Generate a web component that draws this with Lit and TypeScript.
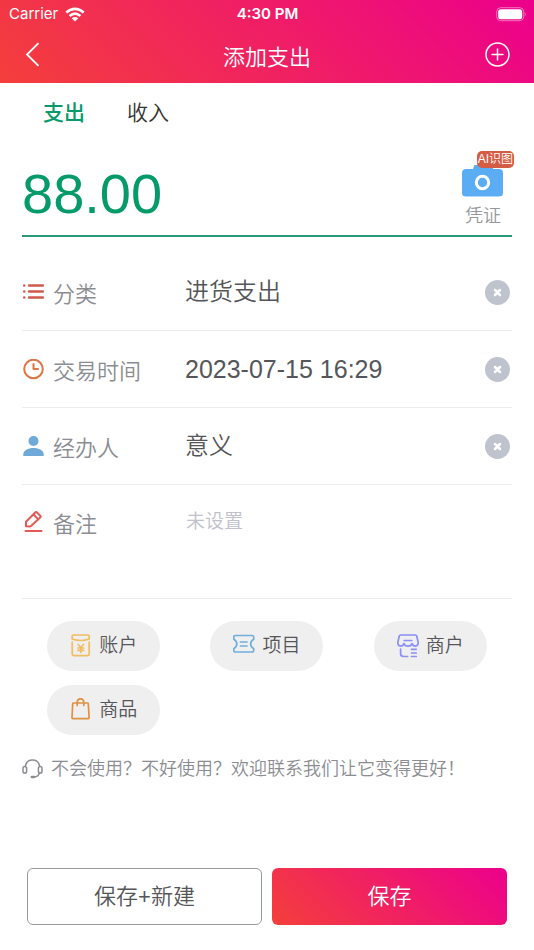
import { LitElement, html, svg, css, TemplateResult } from "lit";
import { customElement, state } from "lit/decorators.js";

const icons: Record<string, TemplateResult> = {
  list: svg`<g fill="none" stroke="#cf5a4d" stroke-linecap="round" stroke-width="2.400">
    <path d="M6 3.500h14M6 9.500h14M6 15.500h14"/><path d="M1.200 3.500h.1M1.200 9.500h.1M1.200 15.500h.1"/></g>`,
  clock: svg`<g fill="none" stroke="#dd7548" stroke-width="2" stroke-linecap="round" stroke-linejoin="round">
    <circle cx="10.500" cy="10" r="9.300"/><path d="M10.500 5v5h4.500"/></g>`,
  person: svg`<g fill="#6fa9d8"><circle cx="10.500" cy="5" r="5"/><path d="M.3 20v-1.500c0-4 4.700-6.400 10.200-6.400s10.200 2.400 10.200 6.400v1.500z"/></g>`,
  pencil: svg`<g fill="none" stroke="#e25a55" stroke-width="2" stroke-linejoin="round" stroke-linecap="round">
    <path d="M3 15.300v-4.600L12.200 1.500q.9-.9 1.800 0l3.200 3.200q.9.900 0 1.800L8 15q-.5.400-1 .4zM10.500 3.500l4.600 4.600M2.500 20h16"/></g>`,
  account: svg`<g fill="none" stroke="#f0bd62" stroke-width="1.700" stroke-linecap="round" stroke-linejoin="round">
    <path d="M3.500 1h14.500q1.200 0 1.200 1.200v2.800q-8.500 3-17 0V2.200q0-1.200 1.300-1.200zM2.200 8v12q0 1.600 1.600 1.600h13.800q1.600 0 1.600-1.600V8"/><path d="M8.200 10.500l2.600 3 2.600-3M10.800 13.500v5M8 14h5.600M8 16.400h5.600"/></g>`,
  project: svg`<g fill="none" stroke="#70afdc" stroke-width="1.700" stroke-linecap="round" stroke-linejoin="round">
    <path d="M2.500 1.500h16.500q1.700 0 1.700 1.700v2.100q-3 1.700-3 4.700t3 4.700v1.600q0 1.700-1.700 1.700H2.500q-1.700 0-1.700-1.700v-1.600q3-1.700 3-4.700t-3-4.700V3.200q0-1.700 1.700-1.700zM7.500 8h6.500M7.500 12h6.500"/></g>`,
  shop: svg`<g fill="none" stroke="#8b8ff5" stroke-width="1.700" stroke-linecap="round" stroke-linejoin="round">
    <path d="M3.700 1h14.600q1.200 0 1.500 1.200l1.400 6.300q.3 3.300-2.700 3.700-2.600 0-3.400-2.700-1 2.700-4.100 2.700t-4.100-2.700q-.8 2.700-3.400 2.700-3-.4-2.700-3.700l1.400-6.300q.3-1.200 1.500-1.200zM7.200 6.500h7.600M3.600 15v4.500q0 3 3 3h4M14.500 15.300h4.700M14.500 19h4.700M14.500 22.500h4.700"/></g>`,
  goods: svg`<g fill="none" stroke="#dc9245" stroke-width="1.700" stroke-linecap="round" stroke-linejoin="round">
    <path d="M3.500 5h14q.7 0 .8.700l.8 14q0 1-1 1H3q-1 0-1-1L2.700 5.700q.1-.7.800-.7zM7.200 7.500V4q.3-3.200 3.300-3.200t3.300 3.200v3.500"/></g>`,
};

@customElement("app-root")
export class AppRoot extends LitElement {
  @state() private tab = "支出";

  private rows = [
    { id: "category", icon: "list", label: "分类", value: "进货支出", kind: "" },
    { id: "time", icon: "clock", label: "交易时间", value: "2023-07-15 16:29", kind: "latin" },
    { id: "handler", icon: "person", label: "经办人", value: "意义", kind: "" },
  ];

  private chips = [
    { icon: "account", label: "账户" },
    { icon: "project", label: "项目" },
    { icon: "shop", label: "商户" },
    { icon: "goods", label: "商品" },
  ];

  static styles = css`
    :host {
      display: flex;
      flex-direction: column;
      min-height: 100vh;
      background: #fff;
      color: #55565a;
      font-family: "Liberation Sans", "Noto Sans CJK SC", sans-serif;
      font-weight: 350;
    }
    * { box-sizing: border-box; }
    button, input, textarea {
      font: inherit;
      color: inherit;
      border: 0;
      padding: 0;
      margin: 0;
      background: none;
      outline: 0;
      min-width: 0;
    }
    button { cursor: pointer; }
    svg { display: block; flex: none; }
    header {
      height: 83px;
      color: #fff;
      background: linear-gradient(45deg, #f43f3b, #ec008c);
    }
    .status, .nav {
      display: grid;
      grid-template-columns: 1fr auto 1fr;
      align-items: center;
    }
    .status {
      height: 28px;
      padding: 0 8px 0 9px;
      font: 400 15px/20px Inter, sans-serif;
    }
    .carrier { display: flex; align-items: center; gap: 7px; }
    .time { font-weight: 600; }
    .end { justify-self: end; }
    .nav { height: 53px; padding: 0 24px; }
    h1, .row label { font-family: "Noto Sans CJK SC", sans-serif; }
    h1 { margin: 0; font-size: 22px; line-height: 32px; font-weight: 350; }
    .tabs { display: flex; gap: 42px; padding: 13px 43px 0; }
    .tab { font-size: 21px; line-height: 34px; color: #333; }
    .tab.on { color: #099a6b; font-weight: 500; }
    main { padding: 0 22px; }
    .amount {
      display: flex;
      align-items: flex-end;
      justify-content: space-between;
      height: 107px;
      border-bottom: 2px solid #259b78;
    }
    .money {
      flex: 1;
      height: 64px;
      margin-bottom: 10px;
      font-size: 56px;
      font-weight: 400;
      color: #059a69;
    }
    .proof {
      position: relative;
      display: flex;
      flex-direction: column;
      align-items: center;
      width: 58px;
      margin-bottom: 6px;
      font-size: 18px;
      line-height: 26px;
      color: #96979b;
      gap: 6px;
    }
    .badge {
      position: absolute;
      top: -14px;
      right: -2px;
      padding: 0 1px;
      border-radius: 5px;
      background: #d45c43;
      color: #fff;
      font-size: 12px;
      line-height: 17px;
      white-space: nowrap;
    }
    .fields { padding-top: 17px; }
    .row {
      display: flex;
      align-items: center;
      height: 77px;
      padding-right: 2px;
      border-bottom: 1px solid #ebebed;
    }
    .row label {
      display: flex;
      align-items: center;
      gap: 9px;
      width: 163px;
      font-size: 22px;
      line-height: 32px;
      color: #8b8d93;
    }
    .row input { flex: 1; height: 36px; line-height: 36px; font-size: 24px; }
    .row .latin { font-size: 25px; font-weight: 400; }
    .row.note { height: 114px; align-items: flex-start; padding-top: 21px; }
    .note textarea {
      flex: 1;
      height: 72px;
      padding: 0 1px;
      resize: none;
      font-size: 19px;
      line-height: 32px;
    }
    .note textarea::placeholder { color: #bfc1cb; }
    .chips {
      display: grid;
      grid-template-columns: repeat(3, 1fr);
      justify-items: center;
      gap: 14px 0;
      padding-top: 22px;
    }
    .chip {
      display: flex;
      align-items: center;
      justify-content: center;
      gap: 7px;
      width: 113px;
      height: 50px;
      border-radius: 25px;
      background: #efefef;
      font-size: 19px;
      line-height: 24px;
    }
    .help {
      display: flex;
      align-items: center;
      gap: 8px;
      margin-top: 20px;
      color: #8b8d93;
      text-decoration: none;
      font-size: 18px;
      line-height: 28px;
    }
    footer {
      display: grid;
      grid-template-columns: 1fr 1fr;
      gap: 10px;
      margin-top: auto;
      padding: 24px 27px 25px;
    }
    .save {
      height: 57px;
      border-radius: 6px;
      font-size: 22px;
      line-height: 32px;
      border: 1px solid #97989b;
    }
    .save.primary {
      border: 0;
      color: #fff;
      background: linear-gradient(45deg, #f43f3b, #ec008c);
    }
  `;

  render() {
    return html`
      <header>
        <div class="status">
          <span class="carrier">Carrier
            <svg width="20" height="15" viewBox="0 0 20 15"><g fill="none" stroke="#fff" stroke-width="2.600"><path d="M1.300 5.600q8.700-7.600 17.400 0M4.600 9q5.400-4.600 10.800 0"/></g><path d="M6.700 11.200q3.300-2.600 6.600 0L10 14.500z" fill="#fff"/></svg>
          </span>
          <span class="time">4:30 PM</span>
          <svg class="end" width="30" height="15" viewBox="0 0 30 15"><rect x=".7" y=".7" width="27" height="13" rx="4" fill="none" stroke="#fff" stroke-opacity=".45"/><rect x="2.200" y="2.200" width="24" height="10" rx="2.500" fill="#fff"/><path d="M28.800 5q1.700 2.200 0 4.500z" fill="#fff" fill-opacity=".5"/></svg>
        </div>
        <div class="nav">
          <button aria-label="返回" type="button">
            <svg width="16" height="25" viewBox="0 0 16 25"><path d="M14.500 1.200L3 12.500l11.500 11.300" fill="none" stroke="#fff" stroke-width="1.800"/></svg>
          </button>
          <h1>添加支出</h1>
          <button class="end" aria-label="新增" type="button">
            <svg width="25" height="25" viewBox="0 0 25 25"><g fill="none" stroke="#fff" stroke-width="1.500" stroke-linecap="round"><circle cx="12.500" cy="12.500" r="11.500"/><path d="M12.500 7v11M7 12.500h11"/></g></svg>
          </button>
        </div>
      </header>
      <div class="tabs" role="tablist">
        ${["支出", "收入"].map(
          (t) => html`<button type="button" role="tab" aria-selected=${this.tab === t} class="tab ${this.tab === t ? "on" : ""}" @click=${() => (this.tab = t)}>${t}</button>`
        )}
      </div>
      <main>
        <div class="amount">
          <input class="money" aria-label="金额" inputmode="decimal" value="88.00" />
          <button class="proof" type="button">
            <svg width="42" height="32" viewBox="0 0 42 32"><path d="M4 4h7l1.600-5h17l1.600 5H37q4 0 4 4v20q0 3.500-4 3.500H4q-4 0-4-3.500V8q0-4 4-4z" fill="#5aadf3"/><circle cx="20.500" cy="17.500" r="6.200" fill="none" stroke="#fff" stroke-width="3"/></svg>
            <span class="badge">AI识图</span>
            <span>凭证</span>
          </button>
        </div>
        <div class="fields">
          ${this.rows.map(
            (r) => html`<div class="row">
              <label for=${r.id}><svg width="22" height="21" viewBox="-1 0 22 21">${icons[r.icon]}</svg>${r.label}</label>
              <input id=${r.id} class=${r.kind} .value=${r.value} />
              <button type="button" aria-label="清除${r.label}">
                <svg width="25" height="25" viewBox="0 0 25 25"><circle cx="12.500" cy="12.500" r="12.500" fill="#bfc3cd"/><path d="M10 10l5 5M15 10l-5 5" stroke="#fff" stroke-width="2.500" stroke-linecap="round"/></svg>
              </button>
            </div>`
          )}
          <div class="row note">
            <label for="note"><svg width="22" height="22" viewBox="-1 0 22 22">${icons.pencil}</svg>备注</label>
            <textarea id="note" placeholder="未设置"></textarea>
          </div>
        </div>
        <div class="chips">
          ${this.chips.map(
            (c) => html`<button type="button" class="chip"><svg width="22" height="24" viewBox="0 0 22 24">${icons[c.icon]}</svg>${c.label}</button>`
          )}
        </div>
        <a class="help" href="#help">
          <svg width="21" height="20" viewBox="0 0 21 20"><g fill="none" stroke="#8b8d93" stroke-width="1.500" stroke-linecap="round"><path d="M3.300 7.500q1-6.500 7.200-6.500t7.200 6.500M17.500 14q-1.200 3.600-5 4"/><rect x="1" y="7.500" width="3.600" height="6.500" rx="1.800"/><rect x="16.400" y="7.500" width="3.600" height="6.500" rx="1.800"/><path d="M9.800 18h2.200" stroke-width="2.400"/></g></svg>
          <span>不会使用？不好使用？欢迎联系我们让它变得更好！</span>
        </a>
      </main>
      <footer>
        <button type="button" class="save">保存+新建</button>
        <button type="button" class="save primary">保存</button>
      </footer>
    `;
  }
}
